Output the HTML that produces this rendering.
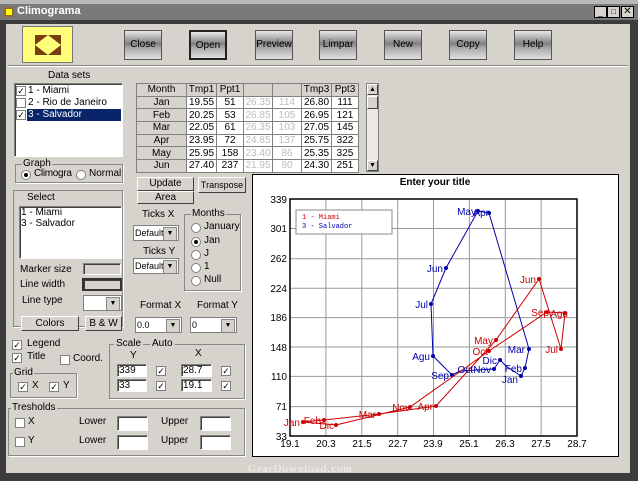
<!DOCTYPE html>
<html><head><meta charset="utf-8"><style>
*{box-sizing:border-box;margin:0;padding:0}
body{width:638px;height:481px;overflow:hidden;background:#3c3c3c;font-family:"Liberation Sans",sans-serif;font-size:10px;color:#000;position:relative}
.a{position:absolute}
.body{left:6px;top:24px;width:624px;height:449px;background:#d6d2cc}
.btn{position:absolute;width:38px;height:30px;background:linear-gradient(#e8e8e8,#808080 45%,#a8a8a8 60%,#e0e0e0);border:1px solid #555;font-size:10px;text-align:center;line-height:28px}
.wb{position:absolute;background:#d6d2cc;border:1px solid;border-color:#fff #404040 #404040 #fff;text-align:center;font-size:10px}
.sunk{position:absolute;background:#fff;border:1px solid;border-color:#808080 #fff #fff #808080;box-shadow:inset 1px 1px 0 #404040}
.grp{position:absolute;border:1px solid #888;box-shadow:1px 1px 0 #fff}
.gl{position:absolute;background:#d6d2cc;padding:0 1px;font-size:10px;top:-7px;left:6px}
.cb{position:absolute;width:10px;height:10px;background:#fff;border:1px solid #808080;font-size:9px;line-height:8px;text-align:center}
.rd{position:absolute;width:10px;height:10px;background:#fff;border:1px solid #808080;border-radius:50%}
.rd.on::after{content:"";position:absolute;left:2px;top:2px;width:4px;height:4px;border-radius:50%;background:#000}
.t{position:absolute;font-size:10px;white-space:nowrap}
table{border-collapse:collapse;position:absolute;left:136px;top:83px;font-size:10px}
td{height:12.7px;border:1px solid #808080;text-align:center;background:#fff;padding:0;line-height:11px}
td.h{background:#d6d2cc}
td.g{color:#bbb}
.dd{position:absolute;height:16px;background:#fff;border:1px solid #808080;font-size:9px;padding-left:1px;line-height:14px;overflow:hidden;white-space:nowrap}
.dd::after{content:"▼";position:absolute;right:1px;top:1px;width:12px;height:12px;background:#d6d2cc;border:1px solid #888;font-size:7px;line-height:11px;text-align:center}
</style></head><body>
<div class="a" style="left:0;top:0;width:638px;height:4px;background:#b8b8b8"></div>
<div class="a" style="left:0;top:4px;width:638px;height:16px;background:#7a7a7a"></div>
<div class="a" style="left:4px;top:7px;width:10px;height:10px;background:#ff0;border:2px solid #963"></div>
<div class="t" style="left:17px;top:5px;color:#fff;font-size:11px;font-weight:bold">Climograma</div>
<div class="a" style="left:594px;top:6px;width:13px;height:12px;background:#d6d2cc;border:1px solid #000;font-size:9px;text-align:center;line-height:10px">_</div>
<div class="a" style="left:607px;top:6px;width:13px;height:12px;background:#d6d2cc;border:1px solid #000;font-size:8px;text-align:center;line-height:10px">□</div>
<div class="a" style="left:621px;top:6px;width:13px;height:12px;background:#d6d2cc;border:1px solid #000;font-size:10px;text-align:center;line-height:10px">✕</div>
<div class="a body"></div>
<div class="a" style="left:8px;top:65px;width:620px;height:2px;border-top:1px solid #888;border-bottom:1px solid #fff"></div>
<div class="a" style="left:22px;top:26px;width:51px;height:37px;background:#ffff7a;border:1px solid #777"></div>
<svg class="a" style="left:22px;top:26px" width="51" height="37"><rect x="13" y="9" width="26" height="20" fill="#7a3d10"/><polygon points="26,9 39,19 26,29 13,19" fill="#ffff7a"/></svg>
<div class="btn" style="left:124px;top:30px">Close</div>
<div class="btn" style="left:189px;top:30px;border:2px solid #222">Open</div>
<div class="btn" style="left:255px;top:30px">Preview</div>
<div class="btn" style="left:319px;top:30px">Limpar</div>
<div class="btn" style="left:384px;top:30px">New</div>
<div class="btn" style="left:449px;top:30px">Copy</div>
<div class="btn" style="left:514px;top:30px">Help</div>

<div class="t" style="left:48px;top:70px">Data sets</div>
<div class="sunk" style="left:14px;top:83px;width:109px;height:74px"></div>
<div class="cb" style="left:16px;top:86px">✓</div><div class="t" style="left:28px;top:85px">1 - Miami</div>
<div class="cb" style="left:16px;top:98px"></div><div class="t" style="left:28px;top:97px">2 - Rio de Janeiro</div>
<div class="cb" style="left:16px;top:110px">✓</div><div class="a" style="left:27px;top:109px;width:94px;height:12px;background:#0a246a"></div><div class="t" style="left:28px;top:109px;color:#fff">3 - Salvador</div>

<div class="grp" style="left:15px;top:164px;width:108px;height:19px"><span class="gl">Graph</span></div>
<div class="rd on" style="left:21px;top:170px"></div><div class="t" style="left:34px;top:168px;letter-spacing:-0.3px">Climogra</div>
<div class="rd" style="left:76px;top:170px"></div><div class="t" style="left:89px;top:168px">Normal</div>

<table>
<tr><td class="h" style="width:50px">Month</td><td class="h" style="width:30px">Tmp1</td><td class="h" style="width:27px">Ppt1</td><td class="h" style="width:29px"></td><td class="h" style="width:29px"></td><td class="h" style="width:30px">Tmp3</td><td class="h" style="width:27px">Ppt3</td></tr>
<tr><td class="h">Jan</td><td>19.55</td><td>51</td><td class="g">26.35</td><td class="g">114</td><td>26.80</td><td>111</td></tr>
<tr><td class="h">Feb</td><td>20.25</td><td>53</td><td class="g">26.85</td><td class="g">105</td><td>26.95</td><td>121</td></tr>
<tr><td class="h">Mar</td><td>22.05</td><td>61</td><td class="g">26.35</td><td class="g">103</td><td>27.05</td><td>145</td></tr>
<tr><td class="h">Apr</td><td>23.95</td><td>72</td><td class="g">24.85</td><td class="g">137</td><td>25.75</td><td>322</td></tr>
<tr><td class="h">May</td><td>25.95</td><td>158</td><td class="g">23.40</td><td class="g">86</td><td>25.35</td><td>325</td></tr>
<tr><td class="h">Jun</td><td>27.40</td><td>237</td><td class="g">21.95</td><td class="g">80</td><td>24.30</td><td>251</td></tr>
</table>
<div class="a" style="left:366px;top:83px;width:13px;height:89px;background:#ece9e4;border:1px solid #808080"></div>
<div class="wb" style="left:367px;top:84px;width:11px;height:11px;font-size:7px;line-height:9px">▲</div>
<div class="wb" style="left:367px;top:96px;width:11px;height:13px"></div>
<div class="wb" style="left:367px;top:160px;width:11px;height:11px;font-size:7px;line-height:9px">▼</div>

<div class="grp" style="left:13px;top:190px;width:110px;height:137px"></div>
<div class="t" style="left:27px;top:192px">Select</div>
<div class="sunk" style="left:19px;top:206px;width:103px;height:53px"></div>
<div class="t" style="left:21px;top:207px">1 - Miami</div><div class="t" style="left:21px;top:218px">3 - Salvador</div>
<div class="t" style="left:20px;top:264px">Marker size</div>
<div class="sunk" style="left:83px;top:263px;width:38px;height:12px;background:#d6d2cc"></div>
<div class="t" style="left:20px;top:279px">Line width</div>
<div class="sunk" style="left:82px;top:278px;width:40px;height:13px;background:#d6d2cc;border:2px solid #333"></div>
<div class="t" style="left:22px;top:295px">Line type</div>
<div class="dd" style="left:83px;top:295px;width:39px"></div>
<div class="wb" style="left:21px;top:316px;width:58px;height:15px;line-height:13px">Colors</div>
<div class="wb" style="left:85px;top:316px;width:37px;height:15px;line-height:13px">B &amp; W</div>

<div class="wb" style="left:137px;top:177px;width:57px;height:14px;line-height:12px">Update</div>
<div class="wb" style="left:137px;top:191px;width:57px;height:13px;line-height:11px">Area</div>
<div class="wb" style="left:198px;top:177px;width:48px;height:16px;line-height:14px;font-size:9px">Transpose</div>
<div class="t" style="left:142px;top:209px">Ticks X</div>
<div class="dd" style="left:133px;top:225px;width:46px">Default</div>
<div class="t" style="left:143px;top:246px">Ticks Y</div>
<div class="dd" style="left:133px;top:258px;width:46px">Default</div>
<div class="grp" style="left:184px;top:214px;width:57px;height:77px"><span class="gl" style="left:6px">Months</span></div>
<div class="rd" style="left:191px;top:223px"></div><div class="t" style="left:204px;top:221px">January</div>
<div class="rd on" style="left:191px;top:237px"></div><div class="t" style="left:204px;top:235px">Jan</div>
<div class="rd" style="left:191px;top:250px"></div><div class="t" style="left:204px;top:248px">J</div>
<div class="rd" style="left:191px;top:263px"></div><div class="t" style="left:204px;top:261px">1</div>
<div class="rd" style="left:191px;top:276px"></div><div class="t" style="left:204px;top:274px">Null</div>
<div class="t" style="left:140px;top:300px">Format X</div>
<div class="t" style="left:197px;top:300px">Format Y</div>
<div class="dd" style="left:135px;top:317px;width:47px">0.0</div>
<div class="dd" style="left:190px;top:317px;width:47px">0</div>

<div class="cb" style="left:12px;top:340px">✓</div><div class="t" style="left:27px;top:338px">Legend</div>
<div class="cb" style="left:12px;top:353px">✓</div><div class="t" style="left:27px;top:351px">Title</div>
<div class="cb" style="left:60px;top:355px"></div><div class="t" style="left:73px;top:353px">Coord.</div>
<div class="grp" style="left:10px;top:373px;width:67px;height:25px"><span class="gl" style="left:2px">Grid</span></div>
<div class="cb" style="left:18px;top:382px">✓</div><div class="t" style="left:32px;top:380px">X</div>
<div class="cb" style="left:49px;top:382px">✓</div><div class="t" style="left:63px;top:380px">Y</div>
<div class="grp" style="left:109px;top:344px;width:136px;height:55px"></div>
<div class="t" style="left:114px;top:338px;background:#d6d2cc;padding:0 2px">Scale</div>
<div class="t" style="left:150px;top:338px;background:#d6d2cc;padding:0 2px">Auto</div>
<div class="t" style="left:130px;top:350px">Y</div><div class="t" style="left:195px;top:348px">X</div>
<div class="sunk" style="left:117px;top:364px;width:30px;height:13px;font-size:10px;padding-left:1px;line-height:11px">339</div>
<div class="sunk" style="left:117px;top:379px;width:30px;height:13px;font-size:10px;padding-left:1px;line-height:11px">33</div>
<div class="cb" style="left:156px;top:366px">✓</div><div class="cb" style="left:156px;top:381px">✓</div>
<div class="sunk" style="left:181px;top:364px;width:31px;height:13px;font-size:10px;padding-left:1px;line-height:11px">28.7</div>
<div class="sunk" style="left:181px;top:379px;width:31px;height:13px;font-size:10px;padding-left:1px;line-height:11px">19.1</div>
<div class="cb" style="left:221px;top:366px">✓</div><div class="cb" style="left:221px;top:381px">✓</div>
<div class="grp" style="left:8px;top:408px;width:237px;height:48px"><span class="gl" style="left:2px">Tresholds</span></div>
<div class="cb" style="left:15px;top:418px"></div><div class="t" style="left:28px;top:416px">X</div>
<div class="cb" style="left:15px;top:437px"></div><div class="t" style="left:28px;top:435px">Y</div>
<div class="t" style="left:79px;top:416px">Lower</div><div class="t" style="left:79px;top:435px">Lower</div>
<div class="t" style="left:161px;top:416px">Upper</div><div class="t" style="left:161px;top:435px">Upper</div>
<div class="sunk" style="left:117px;top:416px;width:31px;height:15px"></div>
<div class="sunk" style="left:117px;top:435px;width:31px;height:15px"></div>
<div class="sunk" style="left:200px;top:416px;width:31px;height:15px"></div>
<div class="sunk" style="left:200px;top:435px;width:31px;height:15px"></div>

<svg class="a" style="left:252px;top:174px" width="367" height="283" viewBox="252 174 367 283" font-family="Liberation Sans,sans-serif">
<rect x="252.5" y="174.5" width="366" height="282" fill="#fff" stroke="#000"/>
<text x="435" y="185" font-size="10" font-weight="bold" text-anchor="middle">Enter your title</text>
<g stroke="#999" stroke-width="1">
<line x1="325.9" y1="199" x2="325.9" y2="436"/><line x1="361.8" y1="199" x2="361.8" y2="436"/><line x1="397.7" y1="199" x2="397.7" y2="436"/><line x1="433.5" y1="199" x2="433.5" y2="436"/><line x1="469.4" y1="199" x2="469.4" y2="436"/><line x1="505.3" y1="199" x2="505.3" y2="436"/><line x1="541.1" y1="199" x2="541.1" y2="436"/>
<line x1="290" y1="406.6" x2="577" y2="406.6"/><line x1="290" y1="376.4" x2="577" y2="376.4"/><line x1="290" y1="347" x2="577" y2="347"/><line x1="290" y1="317.6" x2="577" y2="317.6"/><line x1="290" y1="288.2" x2="577" y2="288.2"/><line x1="290" y1="258.7" x2="577" y2="258.7"/><line x1="290" y1="228.5" x2="577" y2="228.5"/>
</g>
<rect x="290" y="199" width="287" height="237" fill="none" stroke="#000" stroke-width="1.5"/>
<g font-size="10" text-anchor="end">
<text x="287" y="203">339</text><text x="287" y="232">301</text><text x="287" y="262">262</text><text x="287" y="292">224</text><text x="287" y="321">186</text><text x="287" y="351">148</text><text x="287" y="380">110</text><text x="287" y="410">71</text><text x="287" y="440">33</text>
</g>
<g font-size="10" text-anchor="middle">
<text x="290" y="447">19.1</text><text x="326" y="447">20.3</text><text x="362" y="447">21.5</text><text x="398" y="447">22.7</text><text x="433" y="447">23.9</text><text x="469" y="447">25.1</text><text x="505" y="447">26.3</text><text x="541" y="447">27.5</text><text x="577" y="447">28.7</text>
</g>
<rect x="296" y="210" width="96" height="24" fill="#fff" stroke="#888"/>
<text x="302" y="219" font-size="7" fill="#c00" font-family="Liberation Mono,monospace">1 - Miami</text>
<text x="302" y="228" font-size="7" fill="#00a" font-family="Liberation Mono,monospace">3 - Salvador</text>
<polyline fill="none" stroke="#00a" stroke-width="1" points="521,376 525,368 529,349 489,213 478,211 446,268 431,304 433,356 452,375 460,371 494,369 500,360 506,366 521,376"/>
<g fill="#00a"><circle cx="521" cy="376" r="2"/><circle cx="525" cy="368" r="2"/><circle cx="529" cy="349" r="2"/><circle cx="489" cy="213" r="2"/><circle cx="478" cy="211" r="2"/><circle cx="446" cy="268" r="2"/><circle cx="431" cy="304" r="2"/><circle cx="433" cy="356" r="2"/><circle cx="452" cy="375" r="2"/><circle cx="494" cy="369" r="2"/><circle cx="500" cy="360" r="2"/></g>
<polyline fill="none" stroke="#c00" stroke-width="1" points="303,422 324,420 379,414 436,406 496,340 539,279 561,349 565,313 547,312 489,351 410,407 336,425 303,422"/>
<g fill="#c00"><circle cx="303" cy="422" r="2"/><circle cx="324" cy="420" r="2"/><circle cx="379" cy="414" r="2"/><circle cx="436" cy="406" r="2"/><circle cx="496" cy="340" r="2"/><circle cx="539" cy="279" r="2"/><circle cx="561" cy="349" r="2"/><circle cx="565" cy="313" r="2"/><circle cx="547" cy="312" r="2"/><circle cx="489" cy="351" r="2"/><circle cx="410" cy="407" r="2"/><circle cx="336" cy="425" r="2"/></g>
<g font-size="10" fill="#00a" text-anchor="end">
<text x="518" y="383">Jan</text><text x="522" y="372">Feb</text><text x="525" y="353">Mar</text><text x="489" y="216">Apr</text><text x="476" y="215">May</text><text x="443" y="272">Jun</text><text x="428" y="308">Jul</text><text x="430" y="360">Agu</text><text x="449" y="379">Sep</text><text x="473" y="373">Oct</text><text x="491" y="373">Nov</text><text x="497" y="364">Dic</text>
</g>
<g font-size="10" fill="#c00" text-anchor="end">
<text x="300" y="426">Jan</text><text x="321" y="424">Feb</text><text x="376" y="418">Mar</text><text x="433" y="410">Apr</text><text x="493" y="344">May</text><text x="536" y="283">Jun</text><text x="558" y="353">Jul</text><text x="568" y="317">Agu</text><text x="549" y="316">Sep</text><text x="488" y="355">Oct</text><text x="410" y="411">Nov</text><text x="334" y="429">Dic</text>
</g>
</svg>
<div class="t" style="left:248px;top:463px;color:#f4f2ee;font-family:'Liberation Serif',serif;font-size:11px;letter-spacing:1px">GearDownload.com</div>
</body></html>
